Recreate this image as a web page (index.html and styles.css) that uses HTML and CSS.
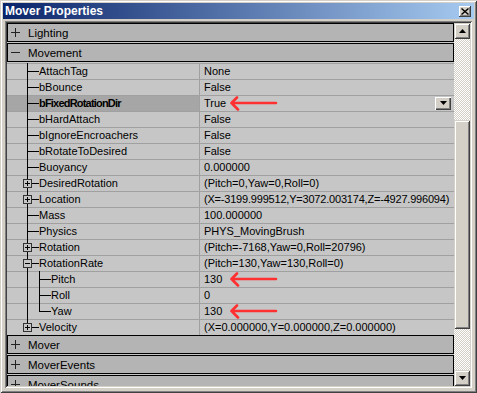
FILE: index.html
```html
<!DOCTYPE html>
<html lang="en">
<head>
    <meta charset="UTF-8">
    <title>Mover Properties</title>
    <link rel="stylesheet" href="styles.css">
</head>
<body>
<div class="window">
    <div class="titlebar">
        <span class="title">Mover Properties</span>
        <span class="close-btn">
            <svg width="8" height="7" viewBox="0 0 8 7"><path d="M0.5 0.5l7 6M7.5 0.5l-7 6" stroke="#000" stroke-width="1.4"/></svg>
        </span>
    </div>

    <div class="frame">
        <div class="list">
            <div class="cat"><span class="sign plus"></span>Lighting</div>
            <div class="cat"><span class="sign minus"></span>Movement</div>

            <div class="row">
                <div class="name"><span class="tree"></span>AttachTag</div>
                <div class="value">None</div>
            </div>
            <div class="row">
                <div class="name"><span class="tree"></span>bBounce</div>
                <div class="value">False</div>
            </div>
            <div class="row hl">
                <div class="name"><span class="tree"></span><b class="bold-label">bFixedRotationDir</b></div>
                <div class="value">
                    <span class="vt">True</span>
                    <svg class="arrow" width="48" height="16" viewBox="0 0 48 16"><path d="M1.5 8H46M7 2.5L1.5 8L8 14.5"/></svg>
                    <span class="dd"><svg width="7" height="4" viewBox="0 0 7 4"><path d="M0 0h7L3.5 4z"/></svg></span>
                </div>
            </div>
            <div class="row">
                <div class="name"><span class="tree"></span>bHardAttach</div>
                <div class="value">False</div>
            </div>
            <div class="row">
                <div class="name"><span class="tree"></span>bIgnoreEncroachers</div>
                <div class="value">False</div>
            </div>
            <div class="row">
                <div class="name"><span class="tree"></span>bRotateToDesired</div>
                <div class="value">False</div>
            </div>
            <div class="row">
                <div class="name"><span class="tree"></span>Buoyancy</div>
                <div class="value">0.000000</div>
            </div>
            <div class="row">
                <div class="name"><span class="tree"><span class="exp plus"></span></span>DesiredRotation</div>
                <div class="value">(Pitch=0,Yaw=0,Roll=0)</div>
            </div>
            <div class="row">
                <div class="name"><span class="tree"><span class="exp plus"></span></span>Location</div>
                <div class="value tight">(X=-3199.999512,Y=3072.003174,Z=-4927.996094)</div>
            </div>
            <div class="row">
                <div class="name"><span class="tree"></span>Mass</div>
                <div class="value">100.000000</div>
            </div>
            <div class="row">
                <div class="name"><span class="tree"></span>Physics</div>
                <div class="value">PHYS_MovingBrush</div>
            </div>
            <div class="row">
                <div class="name"><span class="tree"><span class="exp plus"></span></span>Rotation</div>
                <div class="value">(Pitch=-7168,Yaw=0,Roll=20796)</div>
            </div>
            <div class="row">
                <div class="name"><span class="tree"><span class="exp minus"></span></span>RotationRate</div>
                <div class="value">(Pitch=130,Yaw=130,Roll=0)</div>
            </div>
            <div class="row">
                <div class="name"><span class="tree pass"></span><span class="tree2"></span>Pitch</div>
                <div class="value">
                    <span class="vt">130</span>
                    <svg class="arrow" width="48" height="16" viewBox="0 0 48 16"><path d="M1.5 8H46M7 2.5L1.5 8L8 14.5"/></svg>
                </div>
            </div>
            <div class="row">
                <div class="name"><span class="tree pass"></span><span class="tree2"></span>Roll</div>
                <div class="value">0</div>
            </div>
            <div class="row">
                <div class="name"><span class="tree pass"></span><span class="tree2 end"></span>Yaw</div>
                <div class="value">
                    <span class="vt">130</span>
                    <svg class="arrow" width="48" height="16" viewBox="0 0 48 16"><path d="M1.5 8H46M7 2.5L1.5 8L8 14.5"/></svg>
                </div>
            </div>
            <div class="row last">
                <div class="name"><span class="tree end"><span class="exp plus"></span></span>Velocity</div>
                <div class="value">(X=0.000000,Y=0.000000,Z=0.000000)</div>
            </div>

            <div class="cat"><span class="sign plus"></span>Mover</div>
            <div class="cat"><span class="sign plus"></span>MoverEvents</div>
            <div class="cat"><span class="sign plus"></span>MoverSounds</div>
        </div>

        <div class="scrollbar">
            <div class="sb-btn">
                <svg width="7" height="4" viewBox="0 0 7 4"><path d="M3.5 0L7 4H0z"/></svg>
            </div>
            <div class="sb-track">
                <div class="sb-thumb"></div>
            </div>
            <div class="sb-btn">
                <svg width="7" height="4" viewBox="0 0 7 4"><path d="M0 0h7L3.5 4z"/></svg>
            </div>
        </div>
    </div>
</div>
</body>
</html>
```

FILE: styles.css
```css
body {
    margin: 0;
    background: #d4d0c8;
    font-family: "Liberation Sans", Arial, sans-serif;
    font-size: 11px;
    color: #000;
}

.window {
    width: 477px;
    height: 393px;
    box-sizing: border-box;
    padding: 3px;
    display: flex;
    flex-direction: column;
    background: #d4d0c8;
    box-shadow: inset 1px 1px #d4d0c8, inset -1px -1px #404040,
                inset 2px 2px #fff, inset -2px -2px #808080;
}

.titlebar {
    flex: none;
    height: 16px;
    display: flex;
    align-items: center;
    justify-content: space-between;
    padding-left: 2px;
    background: linear-gradient(to right, #0a246a, #a6caf0);
    color: #fff;
    font-weight: bold;
    font-size: 12px;
}

.close-btn {
    width: 12px;
    height: 11px;
    margin-right: 3px;
    display: flex;
    align-items: center;
    justify-content: center;
    background: #d4d0c8;
    box-shadow: inset -1px -1px #404040, inset 1px 1px #fff, inset -2px -2px #808080;
}

.frame {
    flex: 1;
    min-height: 0;
    margin: 2px;
    padding: 2px;
    display: flex;
    box-shadow: inset 1px 1px #808080, inset -1px -1px #fff,
                inset 2px 2px #404040, inset -2px -2px #d4d0c8;
}

.list {
    flex: 1;
    overflow: hidden;
    background: #c6c6c6;
}

/* category headers */
.cat {
    height: 19px;
    box-sizing: border-box;
    border: 1px solid #000;
    margin-bottom: 1px;
    display: flex;
    align-items: center;
    background: #b4b4b4;
    font-size: 11.5px;
}

.sign {
    width: 9px;
    height: 9px;
    margin: 0 8px 0 3px;
    flex: none;
}

.sign.plus {
    background: linear-gradient(#222, #222) 0 4px / 9px 1px no-repeat,
                linear-gradient(#222, #222) 4px 0 / 1px 9px no-repeat;
}

.sign.minus {
    background: linear-gradient(#222, #222) 0 4px / 9px 1px no-repeat;
}

/* property rows */
.row {
    display: flex;
    height: 16px;
    line-height: 16px;
    white-space: nowrap;
}

.name {
    width: 193px;
    box-sizing: border-box;
    flex: none;
    display: flex;
    align-items: center;
    border-right: 1px solid #a0a0a0;
    background: linear-gradient(#a0a0a0, #a0a0a0) 0 0 / 100% 1px no-repeat, #c6c6c6;
}

.row.hl .name {
    background: linear-gradient(#a0a0a0, #a0a0a0) 0 0 / 100% 1px no-repeat, #a6a6a6;
}

.bold-label {
    letter-spacing: -0.8px;
}

.value {
    flex: 1;
    min-width: 0;
    overflow: hidden;
    display: flex;
    align-items: center;
    padding-left: 4px;
    background: linear-gradient(#a0a0a0, #a0a0a0) 0 0 / 100% 1px no-repeat;
}

.value.tight {
    letter-spacing: -0.2px;
}

.vt {
    width: 26px;
    flex: none;
}

.arrow {
    flex: none;
    overflow: visible;
}

.arrow path {
    fill: none;
    stroke: #ff3030;
    stroke-width: 2.6;
    stroke-linecap: round;
    stroke-linejoin: round;
}

.dd {
    margin-left: auto;
    margin-right: 3px;
    width: 16px;
    height: 13px;
    display: flex;
    align-items: center;
    justify-content: center;
    background: #d4d0c8;
    box-shadow: inset 1px 1px #fff, inset -1px -1px #404040, inset -2px -2px #808080;
}

/* tree lines */
.tree {
    flex: none;
    align-self: stretch;
    width: 32px;
    display: flex;
    align-items: flex-start;
    background: linear-gradient(#000, #000) 20px 0 / 1px 100% no-repeat,
                linear-gradient(#000, #000) 20px 8px / 12px 1px no-repeat;
}

.tree.end {
    background: linear-gradient(#000, #000) 20px 0 / 1px 9px no-repeat,
                linear-gradient(#000, #000) 20px 8px / 12px 1px no-repeat;
}

.tree.pass {
    background: linear-gradient(#000, #000) 20px 0 / 1px 100% no-repeat;
}

.tree2 {
    flex: none;
    align-self: stretch;
    width: 12px;
    background: linear-gradient(#000, #000) 0 0 / 1px 100% no-repeat,
                linear-gradient(#000, #000) 0 8px / 12px 1px no-repeat;
}

.tree2.end {
    background: linear-gradient(#000, #000) 0 0 / 1px 9px no-repeat,
                linear-gradient(#000, #000) 0 8px / 12px 1px no-repeat;
}

.exp {
    width: 9px;
    height: 9px;
    box-sizing: border-box;
    margin: 4px 0 0 16px;
    border: 1px solid #333;
}

.exp.plus {
    background: linear-gradient(#000, #000) center / 5px 1px no-repeat,
                linear-gradient(#000, #000) center / 1px 5px no-repeat, #c6c6c6;
}

.exp.minus {
    background: linear-gradient(#000, #000) center / 5px 1px no-repeat, #c6c6c6;
}

/* scrollbar */
.scrollbar {
    width: 16px;
    flex: none;
    display: flex;
    flex-direction: column;
    background: repeating-conic-gradient(#fff 0 25%, #d4d0c8 0 50%) 0 0 / 2px 2px;
}

.sb-btn {
    height: 16px;
    flex: none;
    display: flex;
    align-items: center;
    justify-content: center;
    background: #d4d0c8;
    box-shadow: inset 1px 1px #d4d0c8, inset -1px -1px #404040,
                inset 2px 2px #fff, inset -2px -2px #808080;
}

.sb-track {
    flex: 1;
}

.sb-thumb {
    margin-top: 81px;
    height: 209px;
    background: #d4d0c8;
    box-shadow: inset 1px 1px #d4d0c8, inset -1px -1px #404040,
                inset 2px 2px #fff, inset -2px -2px #808080;
}
```
